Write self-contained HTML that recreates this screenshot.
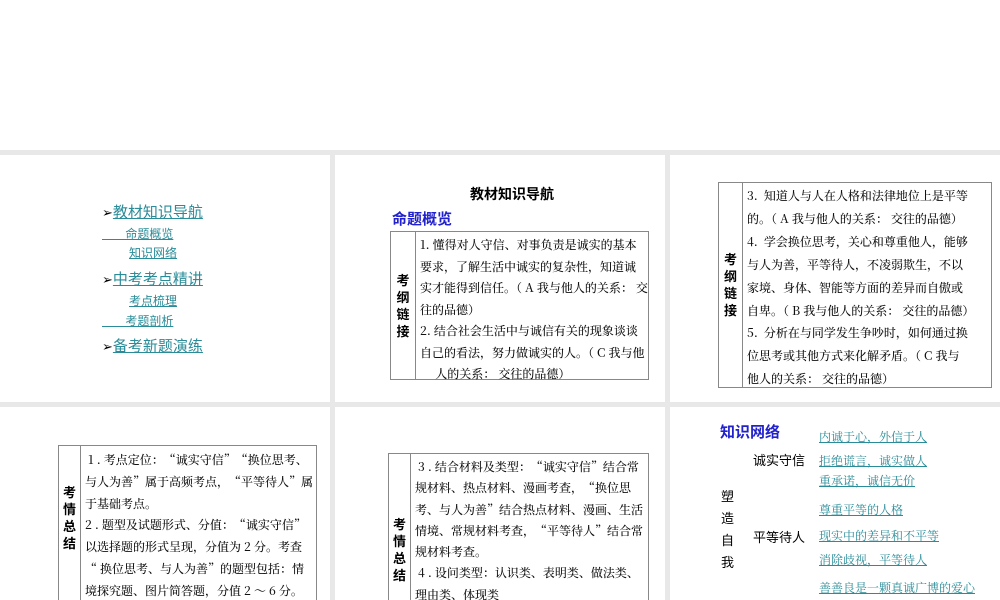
<!DOCTYPE html>
<html><head><meta charset="utf-8"><style>
*{margin:0;padding:0;box-sizing:border-box}
body{width:1000px;height:600px;background:#fff;position:relative;overflow:hidden;font-family:"Liberation Sans","Noto Sans CJK SC",sans-serif}
.g{position:absolute;left:0;top:150px;width:1000px;height:450px;background:#e8e8e8}
.s{position:absolute;background:#fff;overflow:hidden}
.a{position:absolute;white-space:nowrap}
.t{color:#2a8c98;text-decoration:underline}
.tb{position:absolute;border:1px solid #888;display:flex}
.lc{border-right:1px solid #888;display:flex;align-items:center;justify-content:center;font-weight:bold;font-size:13px;line-height:17px;text-align:center;color:#000}
.rc{font-family:"Noto Serif CJK SC","Liberation Serif",serif;font-size:12px;color:#111;padding-left:4px;white-space:nowrap;font-weight:500}
.n{color:#000;font-size:13px}
.b{font-family:"Noto Serif CJK SC","Liberation Serif",serif}
.ar{font-family:"DejaVu Sans",sans-serif;font-size:13px;color:#000}
</style></head><body>
<div class="g"></div>
<!-- slide1 -->
<div class="s" style="left:0;top:155px;width:330px;height:247px">
 <div class="a" style="left:102px;top:46px;font-size:15px"><span class="ar">➢</span><span class="t">教材知识导航</span></div>
 <div class="a t" style="left:102px;top:70px;font-size:12px">&nbsp;&nbsp;&nbsp;&nbsp;&nbsp;&nbsp;&nbsp;命题概览</div>
 <div class="a t" style="left:129px;top:89px;font-size:12px">知识网络</div>
 <div class="a" style="left:102px;top:113px;font-size:15px"><span class="ar">➢</span><span class="t">中考考点精讲</span></div>
 <div class="a t" style="left:129px;top:137px;font-size:12px">考点梳理</div>
 <div class="a t" style="left:102px;top:157px;font-size:12px">&nbsp;&nbsp;&nbsp;&nbsp;&nbsp;&nbsp;&nbsp;考题剖析</div>
 <div class="a" style="left:102px;top:180px;font-size:15px"><span class="ar">➢</span><span class="t">备考新题演练</span></div>
</div>
<!-- slide2 -->
<div class="s" style="left:335px;top:155px;width:330px;height:247px">
 <div class="a" style="left:135px;top:29px;font-size:14px;font-weight:bold">教材知识导航</div>
 <div class="a" style="left:57px;top:53px;font-size:15px;color:#2222cc;font-weight:bold">命题概览</div>
 <div class="tb" style="left:55px;top:76px;width:259px;height:149px">
  <div class="lc" style="width:25px">考<br>纲<br>链<br>接</div>
  <div class="rc" style="line-height:21.5px;padding-top:2px">1. 懂得对人守信、对事负责是诚实的基本<br>要求，了解生活中诚实的复杂性，知道诚<br>实才能得到信任。（ A 我与他人的关系： 交<br>往的品德）<br>2. 结合社会生活中与诚信有关的现象谈谈<br>自己的看法，努力做诚实的人。（ C 我与他<br>&nbsp;&nbsp;&nbsp;&nbsp;&nbsp;人的关系： 交往的品德）</div>
 </div>
</div>
<!-- slide3 -->
<div class="s" style="left:670px;top:155px;width:330px;height:247px">
 <div class="tb" style="left:48px;top:27px;width:274px;height:206px">
  <div class="lc" style="width:24px">考<br>纲<br>链<br>接</div>
  <div class="rc" style="line-height:22.9px;padding-top:2px">3.&nbsp; 知道人与人在人格和法律地位上是平等<br>的。（ A 我与他人的关系： 交往的品德）<br>4.&nbsp; 学会换位思考，关心和尊重他人，能够<br>与人为善，平等待人，不凌弱欺生，不以<br>家境、身体、智能等方面的差异而自傲或<br>自卑。（ B 我与他人的关系： 交往的品德）<br>5.&nbsp; 分析在与同学发生争吵时，如何通过换<br>位思考或其他方式来化解矛盾。（ C 我与<br>他人的关系： 交往的品德）</div>
 </div>
</div>
<!-- slide4 -->
<div class="s" style="left:0;top:407px;width:330px;height:193px">
 <div class="tb" style="left:58px;top:38px;width:259px;height:170px">
  <div class="lc" style="width:22px;align-items:flex-start;padding-top:38px">考<br>情<br>总<br>结</div>
  <div class="rc" style="line-height:21.8px;padding-top:3px">&nbsp;1 . 考点定位：“诚实守信”“换位思考、<br>与人为善”属于高频考点，“平等待人”属<br>于基础考点。<br>2 . 题型及试题形式、分值：“诚实守信”<br>以选择题的形式呈现，分值为 2 分。考查<br>“ 换位思考、与人为善”的题型包括：情<br>境探究题、图片简答题，分值 2 ～ 6 分。</div>
 </div>
</div>
<!-- slide5 -->
<div class="s" style="left:335px;top:407px;width:330px;height:193px">
 <div class="tb" style="left:53px;top:46px;width:261px;height:170px">
  <div class="lc" style="width:22px;align-items:flex-start;padding-top:62px">考<br>情<br>总<br>结</div>
  <div class="rc" style="line-height:21.3px;padding-top:2px">&nbsp;3 . 结合材料及类型：“诚实守信”结合常<br>规材料、热点材料、漫画考查，“换位思<br>考、与人为善”结合热点材料、漫画、生活<br>情境、常规材料考查，“平等待人”结合常<br>规材料考查。<br>&nbsp;4 . 设问类型：认识类、表明类、做法类、<br>理由类、体现类</div>
 </div>
</div>
<!-- slide6 -->
<div class="s" style="left:670px;top:407px;width:330px;height:193px">
 <div class="a" style="left:50px;top:14px;font-size:15px;color:#2222cc;font-weight:bold">知识网络</div>
 <div class="a n" style="left:83px;top:43px">诚实守信</div>
 <div class="a n" style="left:83px;top:120px">平等待人</div>
 <div class="a n" style="left:51px;top:79px;line-height:22px;font-size:13px">塑<br>造<br>自<br>我</div>
 <div class="a t b" style="left:149px;top:21px;font-size:12px">内诚于心，外信于人</div>
 <div class="a t b" style="left:149px;top:45px;font-size:12px">拒绝谎言，诚实做人</div>
 <div class="a t b" style="left:149px;top:65px;font-size:12px">重承诺，诚信无价</div>
 <div class="a t b" style="left:149px;top:94px;font-size:12px">尊重平等的人格</div>
 <div class="a t b" style="left:149px;top:120px;font-size:12px">现实中的差异和不平等</div>
 <div class="a t b" style="left:149px;top:144px;font-size:12px">消除歧视，平等待人</div>
 <div class="a t b" style="left:149px;top:172px;font-size:12px">善善良是一颗真诚广博的爱心</div>
</div>
</body></html>
